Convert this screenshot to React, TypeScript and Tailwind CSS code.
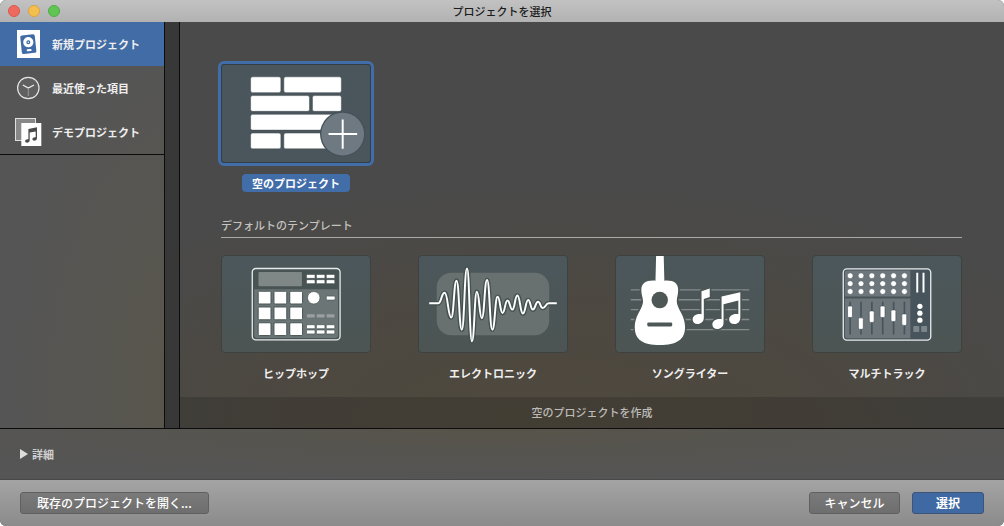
import type { ReactNode } from "react";

const wave: [number, number][] = [
  [82, 174], [102, 142], [122, 217], [138, 105], [154, 254], [170, 68], [185, 289],
  [200, 139], [215, 219], [231, 103], [247, 254], [263, 154], [278, 203], [293, 165],
  [308, 193], [323, 150], [340, 205], [356, 164], [370, 193], [386, 169], [400, 188], [418, 174],
];

const wavePath = wave.reduce((path, [x, y], i) => {
  if (i === 0) return `M55 174H${x}`;
  const mid = (wave[i - 1][0] + x) / 2;
  return `${path}C${mid} ${wave[i - 1][1]} ${mid} ${y} ${x} ${y}`;
}, "") + "H443";

function EmptyArt() {
  const blocks = [
    [120, 78, 92], [221, 78, 175],
    [120, 135, 179], [308, 135, 88],
    [120, 192, 276],
    [120, 249, 92], [221, 249, 150],
  ];
  return (
    <svg viewBox="33 42 450 294" className="block w-full" aria-hidden="true">
      {blocks.map(([x, y, w]) => (
        <rect key={`${x}-${y}`} x={x} y={y} width={w} height="48" rx="6" fill="#fff" stroke="#3f4a50" strokeWidth="1.5" />
      ))}
      <circle cx="400" cy="252" r="69" fill="#46525a" />
      <circle cx="400" cy="252" r="65" fill="#6f7982" />
      <path d="M357 252H444M400 208V297" stroke="#fff" strokeWidth="6" />
    </svg>
  );
}

function HipHopArt() {
  const cols = [291, 321, 351];
  return (
    <svg viewBox="33 135 450 294" className="block w-full" aria-hidden="true">
      <rect x="125" y="173" width="267" height="217" rx="11" fill="#485354" stroke="#e8ebeb" strokeWidth="4" />
      <path d="M131 236H386V376Q386 384 378 384H139Q131 384 131 376Z" fill="#6b7575" />
      <rect x="144" y="184" width="132" height="43" rx="3" fill="#7f8887" />
      {[243, 291, 339].map((y) =>
        [144, 192, 240].map((x) => (
          <rect key={`${x}-${y}`} x={x - 1} y={y - 1} width="39" height="39" rx="4" fill="#fff" stroke="#465151" strokeWidth="3" />
        )),
      )}
      {[192, 208, 345, 361].map((y) =>
        cols.map((x) => (
          <rect key={`${x}-${y}`} x={x - 1} y={y - 1} width="26" height="12" rx="3" fill="#fff" stroke="#465151" strokeWidth="2" />
        )),
      )}
      {cols.map((x) => <rect key={x} x={x} y="312" width="24" height="10" rx="2" fill="#9aa09f" />)}
      <circle cx="312" cy="262" r="19" fill="#fff" stroke="#465151" strokeWidth="2" />
      <rect x="350" y="257" width="27" height="12" rx="3" fill="#fff" stroke="#465151" strokeWidth="2" />
    </svg>
  );
}

function ElectronicArt() {
  return (
    <svg viewBox="24 30 450 294" className="block w-full" fill="none" aria-hidden="true">
      <rect x="78" y="81" width="342" height="190" rx="44" fill="#687170" />
      <path d={wavePath} stroke="#455050" strokeWidth="14" strokeLinejoin="round" />
      <path d={wavePath} stroke="#fff" strokeWidth="6" strokeLinejoin="round" />
    </svg>
  );
}

function SongwriterArt() {
  return (
    <svg viewBox="30 30 450 294" className="block w-full" aria-hidden="true">
      <path d="M75 133H435M75 163H435M75 193H435M75 223H435M75 254H435" stroke="#848b8a" strokeWidth="4" />
      <g fill="#fff" stroke="#4b5655" strokeWidth="10" paintOrder="stroke">
        <path d="M152 26H175L177 105C205 103 219 112 219 134C219 152 212 160 216 176C221 196 240 214 240 246C240 285 214 301 163 301S87 285 87 246C87 214 106 196 111 176C115 160 107 152 107 134C107 112 122 103 150 105Z" />
        <path d="M290 137L315 129V155L297 161V218C297 230 288 237 278 237C269 237 263 231 263 223C263 212 275 204 290 207Z" />
        <path d="M351 153L408 140V217C408 230 400 237 389 237C380 237 374 231 374 223C374 212 386 204 402 207V165L357 177V233C357 245 348 252 338 252C329 252 323 246 323 238C323 227 335 219 351 222Z" />
      </g>
      <circle cx="163" cy="164" r="25" fill="#4c5756" />
      <rect x="125" y="232" width="76" height="12" rx="4" fill="#4c5756" />
    </svg>
  );
}

function MultitrackArt() {
  const cols = [149, 182, 215, 248, 281, 314];
  const handles = [199, 235, 214, 199, 211, 223];
  return (
    <svg viewBox="36 30 450 294" className="block w-full" aria-hidden="true">
      <rect x="128" y="69" width="266" height="217" rx="11" fill="#48545b" stroke="#e8ebed" strokeWidth="4" />
      <path d="M140 74H332V153H133V81Q133 74 140 74ZM133 159H332V280H140Q133 280 133 273Z" fill="#6c767b" />
      {cols.map((x, i) => (
        <g key={x}>
          {[90, 114, 138].map((y) => <circle key={y} cx={x} cy={y} r="9" fill="#fff" stroke="#4c585e" strokeWidth="2" />)}
          <path d={`M${x} 169V269`} stroke="#48545b" strokeWidth="5" />
          <rect x={x - 8} y={handles[i] - 17} width="15" height="35" rx="4" fill="#fff" stroke="#48545b" strokeWidth="2" />
        </g>
      ))}
      <path d="M353 81V141M372 81V141" stroke="#fff" strokeWidth="6" />
      {[183, 204, 225].map((y) => <circle key={y} cx="361" cy={y} r="8" fill="#fff" />)}
      <rect x="341" y="243" width="18" height="18" rx="2" fill="#7b858b" />
      <rect x="365" y="243" width="18" height="18" rx="2" fill="#7b858b" />
    </svg>
  );
}

function NewIcon() {
  return (
    <svg viewBox="0 0 28 28" className="size-7 shrink-0" aria-hidden="true">
      <rect x="3" y="0" width="23" height="28" fill="#fff" />
      <g transform="rotate(-6 14.3 14)">
        <rect x="7" y="4.9" width="14.6" height="18.6" rx="1.8" fill="#3f6ba6" />
        <circle cx="14.5" cy="12.2" r="5.1" fill="#fff" />
        <circle cx="14.5" cy="12.2" r="2" fill="#3f6ba6" />
        <circle cx="14.5" cy="12.2" r=".8" fill="#fff" />
        <rect x="12" y="19.2" width="5" height="2" rx="1" fill="#fff" />
      </g>
    </svg>
  );
}

function RecentIcon() {
  return (
    <svg viewBox="0 0 28 28" className="size-7 shrink-0" fill="none" aria-hidden="true">
      <circle cx="14.3" cy="14" r="10.7" fill="#606060" stroke="#e6e6e6" strokeWidth="1.2" />
      <path d="M8.8 11L14.3 14L20 11" stroke="#eee" strokeWidth="1.3" />
      <path d="M14.3 14V22" stroke="#999" />
    </svg>
  );
}

function DemoIcon() {
  return (
    <svg viewBox="0 0 28 28" className="size-7 shrink-0" aria-hidden="true">
      <rect x="1.5" y=".5" width="20" height="22" fill="#888" stroke="#e0e0e0" />
      <rect x="7.3" y="5" width="20" height="23" fill="#fff" />
      <path d="M14.4 11L23 9.3V20C23 21.8 21.8 22.8 20.4 22.8C19.2 22.8 18.4 22.1 18.4 21.1C18.4 19.8 19.9 18.9 21.7 19.2V13.4L15.7 14.6V22C15.7 23.8 14.5 24.8 13.1 24.8C11.9 24.8 11.1 24.1 11.1 23.1C11.1 21.8 12.6 20.9 14.4 21.2Z" fill="#4a4a4a" />
    </svg>
  );
}

const sections: { label: string; icon: ReactNode }[] = [
  { label: "新規プロジェクト", icon: <NewIcon /> },
  { label: "最近使った項目", icon: <RecentIcon /> },
  { label: "デモプロジェクト", icon: <DemoIcon /> },
];

const templates: { label: string; art: ReactNode }[] = [
  { label: "ヒップホップ", art: <HipHopArt /> },
  { label: "エレクトロニック", art: <ElectronicArt /> },
  { label: "ソングライター", art: <SongwriterArt /> },
  { label: "マルチトラック", art: <MultitrackArt /> },
];

export default function App() {
  return (
    <div className="min-h-screen bg-white font-['Noto_Sans_CJK_JP',sans-serif] text-[11px] font-bold text-[#eeeeee]">
      <div className="flex min-h-screen flex-col overflow-hidden rounded-[6px] bg-[#555555]">
        <header className="relative flex h-[22px] items-center justify-center bg-linear-to-b from-[#c2c2c2] to-[#b2b2b2]">
          <div className="absolute left-2 flex gap-2">
            <button aria-label="閉じる" className="size-3 rounded-full border border-[#d9574d] bg-[#ee6a5f]" />
            <button aria-label="しまう" className="size-3 rounded-full border border-[#dba53c] bg-[#f5bf4f]" />
            <button aria-label="拡大" className="size-3 rounded-full border border-[#51ad43] bg-[#61c554]" />
          </div>
          <h1 className="text-[11px] leading-4 font-medium text-[#1c1c1c]">プロジェクトを選択</h1>
        </header>

        <div className="flex flex-1 border-b border-[#0c0c0c]">
          <nav className="w-[165px] shrink-0 border-r border-[#0c0c0c] bg-[radial-gradient(ellipse_at_120%_90%,#59564a_0%,#555555_65%)]">
            <ul className="border-b border-[#0c0c0c]">
              {sections.map(({ label, icon }, i) => (
                <li key={label}>
                  <button
                    aria-current={i === 0}
                    className="flex h-11 w-full items-center gap-2.5 pl-3.5 text-left aria-[current=true]:bg-[#416ca5]"
                  >
                    {icon}
                    {label}
                  </button>
                </li>
              ))}
            </ul>
          </nav>
          <div className="w-[15px] shrink-0 border-r border-[#0c0c0c] bg-[#383838]" />

          <main className="flex min-w-0 flex-1 flex-col justify-between bg-[radial-gradient(ellipse_70%_60%_at_45%_100%,#4f493e_0%,#4d4840_45%,#4a4a4a_100%)]">
            <div className="pt-[39px] pr-[42px] pl-[41px]">
              <button className="-ml-[3px] flex w-min flex-col items-center gap-2">
                <span className="block w-39 rounded-[6px] border-3 border-[#416da9] bg-[#4a555c]">
                  <span className="block overflow-hidden rounded-[3px] border border-[#333d44]">
                    <EmptyArt />
                  </span>
                </span>
                <span className="rounded-[4px] bg-[#416da9] px-2.5 leading-[18px] text-white">空のプロジェクト</span>
              </button>
              <h2 className="mt-[25px] border-b border-[#aaaaaa] pb-1 text-[11px] leading-4 font-medium text-[#c4c2bf]">デフォルトのテンプレート</h2>
              <div className="mt-[17px] flex justify-between">
                {templates.map(({ label, art }) => (
                  <button key={label} className="flex w-[150px] flex-col items-center gap-3">
                    <span className="block w-full overflow-hidden rounded-[4px] border border-[#3d4140] bg-linear-to-b from-[#4c575c] to-[#4c5553]">
                      {art}
                    </span>
                    <span className="leading-4">{label}</span>
                  </button>
                ))}
              </div>
            </div>
            <p className="bg-black/15 py-2 text-center leading-[15px] font-medium text-[#bcbbb8]">空のプロジェクトを作成</p>
          </main>
        </div>

        <div className="bg-[radial-gradient(ellipse_60%_100%_at_50%_0%,#57544a_0%,#555555_100%)] px-5 py-4">
          <button aria-expanded="false" className="flex items-center gap-1 leading-[18px] text-[#cfcfcf]">
            <svg viewBox="0 0 8 10" className="h-2.5 w-2" aria-hidden="true">
              <path d="M0 0L8 5L0 10Z" fill="#dddddd" />
            </svg>
            詳細
          </button>
        </div>

        <footer className="flex items-center gap-3 border-t border-[#484848] bg-linear-to-b from-[#a4a4a4] to-[#8b8b8b] px-5 py-3 text-[12px] leading-5 font-medium text-white">
          <button className="mr-auto rounded-[3px] border border-[#606060] bg-linear-to-b from-[#7a7a7a] to-[#6e6e6e] px-4">既存のプロジェクトを開く...</button>
          <button className="w-[91px] rounded-[3px] border border-[#606060] bg-linear-to-b from-[#7a7a7a] to-[#6e6e6e]">キャンセル</button>
          <button className="w-[72px] rounded-[3px] border border-[#3d5478] bg-[#3e69a3] font-bold">選択</button>
        </footer>
      </div>
    </div>
  );
}
